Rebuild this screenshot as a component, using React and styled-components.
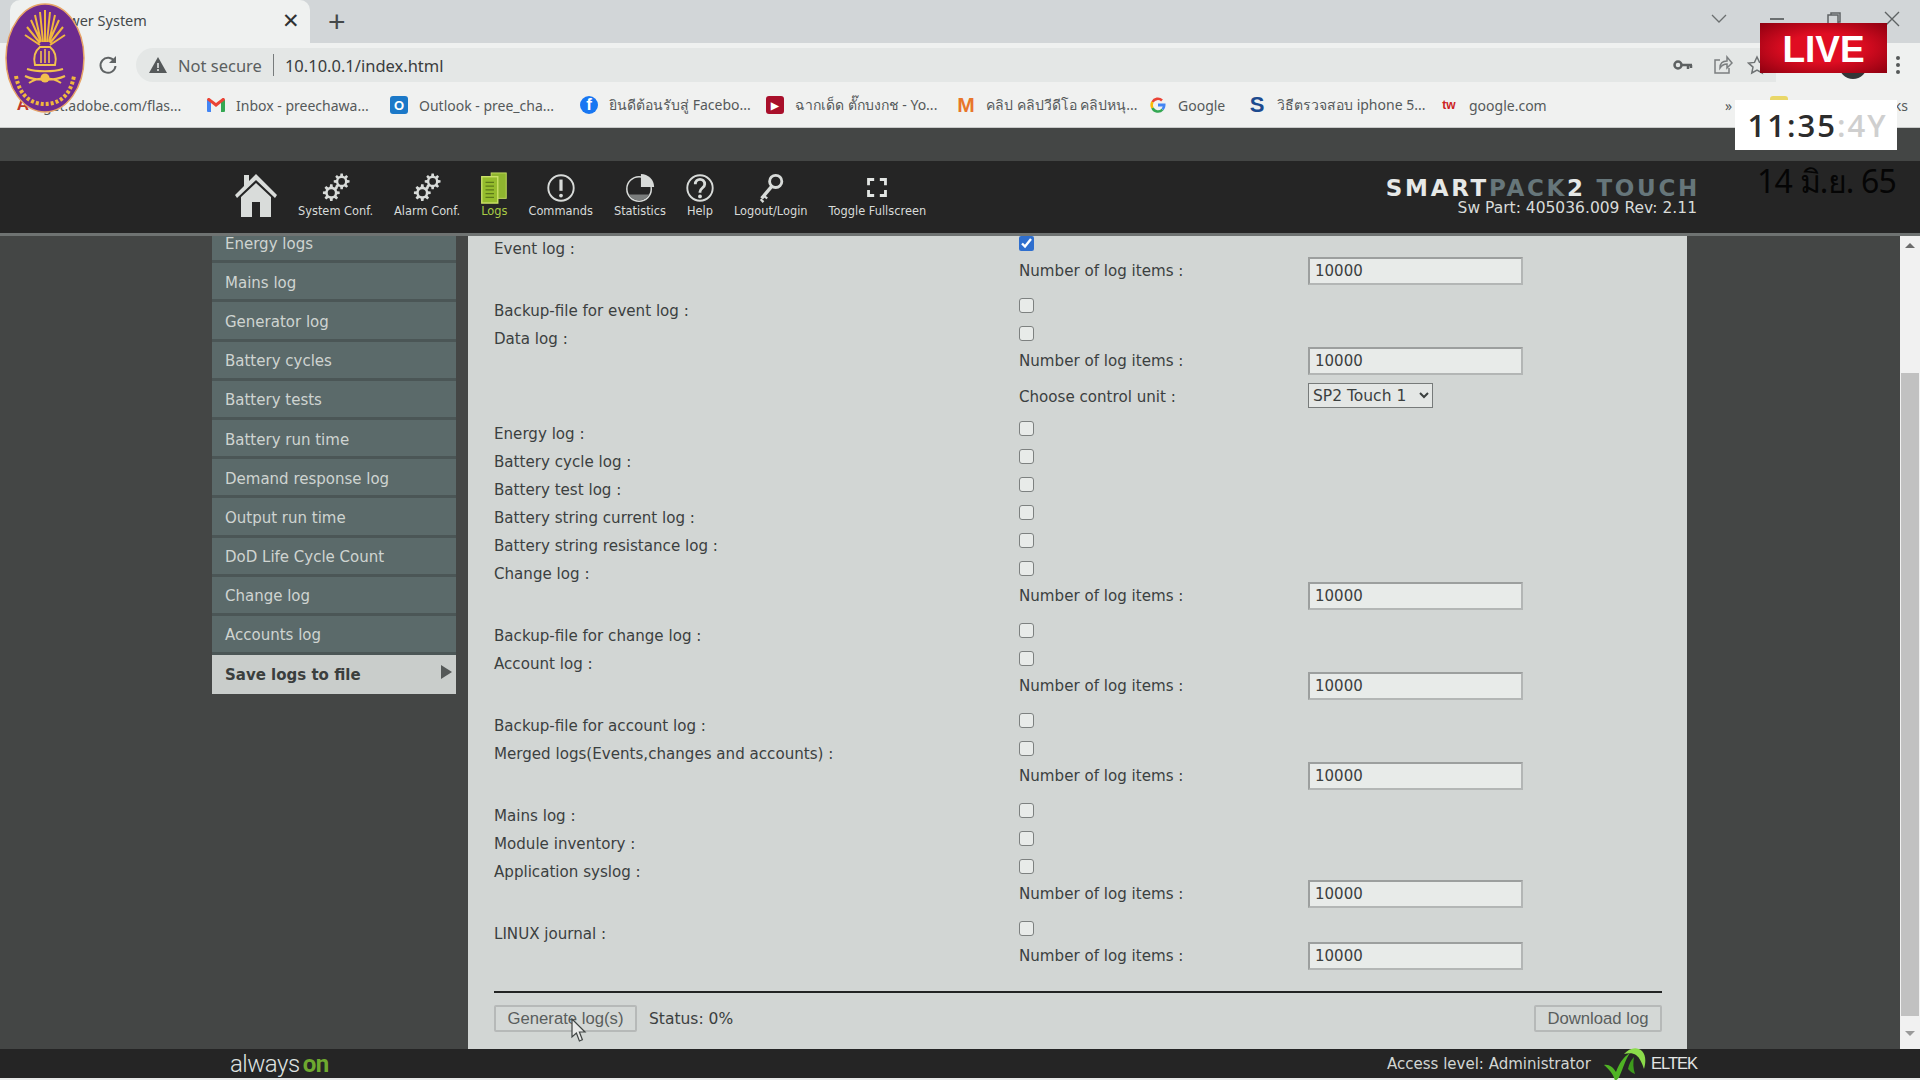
import React from "react";
import styled, { createGlobalStyle } from "styled-components";

const GlobalStyle = createGlobalStyle`
  html, body {
    margin: 0;
    padding: 0;
    width: 1920px;
    height: 1080px;
    overflow: hidden;
    background: #e9ebea;
  }
  * { box-sizing: border-box; }
`;

const gearPath = (cx, cy, r, teeth = 8) => {
  const pts = [];
  const step = (Math.PI * 2) / teeth;
  for (let i = 0; i < teeth; i++) {
    const a = i * step;
    [[-0.3, 0.72], [-0.17, 1], [0.17, 1], [0.3, 0.72]].forEach(([o, k]) => {
      const t = a + o * step * 1.1;
      pts.push(`${(cx + Math.cos(t) * r * k).toFixed(2)} ${(cy + Math.sin(t) * r * k).toFixed(2)}`);
    });
  }
  const h = r * 0.42;
  return `M${pts.join("L")}Z M${cx - h} ${cy}a${h} ${h} 0 1 0 ${h * 2} 0a${h} ${h} 0 1 0 ${-h * 2} 0Z`;
};

const Gears = () => (
  <svg width="30" height="34" viewBox="0 0 30 34">
    <path fill="#d8dbd9" fillRule="evenodd" d={gearPath(21, 10, 8.5)} />
    <path fill="#d8dbd9" fillRule="evenodd" d={gearPath(10, 22, 9)} />
  </svg>
);

const HomeIcon = () => (
  <svg width="42" height="46" viewBox="0 0 42 46">
    <path fill="#d9dcda" d="M9 3h5v6L21 2l21 21-2 3L21 8 2 26l-2-3 9-9z" />
    <path fill="#d9dcda" d="M6 25 21 11l15 14v20H25V30h-8v15H6z" />
  </svg>
);

const LogsIcon = () => (
  <svg width="28" height="34" viewBox="0 0 28 34">
    <rect x="11" y="1" width="16" height="27" fill="#8fb52f" stroke="#c4dc62" />
    <rect x="1" y="5" width="17" height="28" fill="#95bc2d" stroke="#cbe268" strokeWidth="1.5" />
    <path stroke="#5d7a1a" strokeWidth="1.5" d="M5 11h9M5 15h9M5 19h9M5 23h9M5 27h9" />
  </svg>
);

const CommandsIcon = () => (
  <svg width="32" height="34" viewBox="0 0 32 34">
    <circle cx="16" cy="17" r="13.5" fill="none" stroke="#d8dbd9" strokeWidth="2" />
    <path stroke="#d8dbd9" strokeWidth="3.4" d="M16 8v12" />
    <circle cx="16" cy="25" r="2" fill="#d8dbd9" />
  </svg>
);

const StatsIcon = () => (
  <svg width="32" height="34" viewBox="0 0 32 34">
    <circle cx="15" cy="18" r="13" fill="none" stroke="#d8dbd9" strokeWidth="1.6" />
    <path fill="#d8dbd9" d="M17 2a14 14 0 0 1 14 14H17z" />
    <path fill="#7a7d7c" d="M4 24h22a13 13 0 0 1-22 0z" />
  </svg>
);

const HelpIcon = () => (
  <svg width="32" height="34" viewBox="0 0 32 34">
    <circle cx="16" cy="17" r="13.5" fill="none" stroke="#d8dbd9" strokeWidth="2" />
    <path fill="none" stroke="#d8dbd9" strokeWidth="3" d="M11 13c0-7 10-7 10 0 0 4-5 4-5 8v1" />
    <circle cx="16" cy="26" r="2" fill="#d8dbd9" />
  </svg>
);

const KeyIcon = () => (
  <svg width="30" height="34" viewBox="0 0 30 34">
    <circle cx="20" cy="10" r="6.5" fill="none" stroke="#d8dbd9" strokeWidth="3" />
    <path stroke="#d8dbd9" strokeWidth="3.6" d="M16 15 5 28" />
    <path stroke="#d8dbd9" strokeWidth="2.4" d="m7 25 4 3M4 29l3 3" />
  </svg>
);

const FullscreenIcon = () => (
  <svg width="22" height="34" viewBox="0 0 22 34">
    <path fill="none" stroke="#e2e5e3" strokeWidth="3" d="M2 14V8h6M14 8h6v6M20 19v6h-6M8 25H2v-6" />
  </svg>
);

const Emblem = () => (
  <svg width="80" height="110" viewBox="0 0 80 110">
    <ellipse cx="40" cy="55" rx="39" ry="54" fill="#6d2b8e" stroke="#e7a467" strokeWidth="1.5" />
    <g stroke="#f0b73f" strokeWidth="2" fill="none">
      <path d="M40 7v32M35 9l3 30M45 9l-3 30M30 12l6 27M50 12l-6 27M26 17l10 22M54 17 44 39M22 24l13 16M58 24 45 40M20 32l15 10M60 32 45 42" />
    </g>
    <path fill="none" stroke="#f2c04e" strokeWidth="2" d="M30 62c-2-8 0-14 5-18h10c5 4 7 10 5 18z" />
    <path fill="none" stroke="#f2c04e" strokeWidth="1.600" d="M36 48v12M40 46v14M44 48v12" />
    <path fill="none" stroke="#f2c04e" strokeWidth="2" d="M20 73c10 5 30 5 40 0M24 80c8-6 24-6 32 0M22 66c10 3 26 3 36 0" />
    <circle cx="40" cy="75" r="4.500" fill="#f2c04e" />
    <path fill="none" stroke="#f0b73f" strokeWidth="4" strokeDasharray="3 2" d="M11 73c4 22 17 28 29 28s25-6 29-28" />
  </svg>
);

const Mouse = () => (
  <svg width="16" height="25" viewBox="0 0 16 25">
    <path fill="#e8e9e8" stroke="#3f4443" strokeWidth="1.2" d="M1 1v18l4.4-4 3 8 3-1.300-3-7.700H14z" />
  </svg>
);

const EltekMark = () => (
  <svg width="42" height="34" viewBox="0 0 42 34">
    <path fill="#4fb324" d="M0 18c5-1 9 2 12 7 3-8 7-15 14-19-5 7-7 16-10 22-1 3-3 5-5 6C10 28 5 22 0 18z" />
    <path fill="#8bdc4a" d="M20 7c5-6 13-8 18-3 4 4 4 11 2 18-2-6-4-11-8-14-3-2-7-2-12-1z" />
    <path fill="#3d9a1c" d="M24 22c1-5 3-9 6-12-1 6-1 11 1 17-3-1-5-3-7-5z" />
  </svg>
);

const GmailIcon = () => (
  <svg width="18" height="14" viewBox="0 0 18 14">
    <path fill="#4285f4" d="M0 2h4v12H1a1 1 0 0 1-1-1z" />
    <path fill="#34a853" d="M14 2h4v11a1 1 0 0 1-1 1h-3z" />
    <path fill="#ea4335" d="M0 2c0-2 2-2.500 3-1.500L9 5l6-4.500c1-1 3-.5 3 1.500l-4 3-5 4-5-4z" />
  </svg>
);

const GoogleIcon = () => (
  <svg width="16" height="16" viewBox="0 0 16 16">
    <path fill="none" stroke="#ea4335" strokeWidth="2.600" d="M2.500 5A6 6 0 0 1 12 3.500" />
    <path fill="none" stroke="#fbbc05" strokeWidth="2.600" d="M2.500 11a6 6 0 0 1 0-6" />
    <path fill="none" stroke="#34a853" strokeWidth="2.600" d="M12.500 12.500A6 6 0 0 1 2.500 11" />
    <path fill="#4285f4" d="M8 6.500h7.500c.3 2.500-.5 5-2 6.800L11.500 11.500c.6-.5 1-1.200 1.200-2H8z" />
  </svg>
);

const Root = styled.div`
  position: relative;
  width: 1920px;
  height: 1080px;
  overflow: hidden;
  display: flex;
  flex-direction: column;
  font-family: "DejaVu Sans", sans-serif;
`;

/* browser chrome */
const TabStrip = styled.div`
  height: 43px;
  background: #d2d6d8;
  display: flex;
  align-items: stretch;
  padding-left: 10px;
`;

const Tab = styled.div`
  width: 300px;
  background: #eff1f0;
  border-radius: 10px 10px 0 0;
  display: flex;
  align-items: center;
  padding: 0 10px 3px 41px;
  font: 14.5px "Noto Sans", sans-serif;
  color: #45494a;
`;

const TabClose = styled.span`
  margin-left: auto;
  font-size: 21px;
  color: #2f3233;
`;

const NewTab = styled.span`
  margin-left: 18px;
  align-self: center;
  font: 30px "Liberation Sans", sans-serif;
  color: #444849;
`;

const WindowControls = styled.div`
  margin-left: auto;
  display: flex;
  align-items: center;
  gap: 43px;
  padding: 0 20px 6px 0;
  color: #5c6061;
`;

const Toolbar = styled.div`
  height: 39px;
  background: #eff1f0;
  padding: 5px 20px 0 98px;
  display: flex;
  align-items: stretch;
`;

const Reload = styled.div`
  width: 38px;
  display: flex;
  align-items: center;
`;

const AddressBar = styled.div`
  width: 1640px;
  background: #e4e7e6;
  border-radius: 17px 0 0 17px;
  display: flex;
  align-items: center;
  padding-left: 13px;
  font: 16.500px "Noto Sans", sans-serif;
  color: #5b5f60;
`;

const Url = styled.span`
  color: #3a3d3e;
`;

const Divider = styled.span`
  width: 1px;
  height: 22px;
  background: #777b7c;
  margin: 0 11px;
`;

const AddressIcons = styled.div`
  margin-left: auto;
  display: flex;
  align-items: center;
  gap: 20px;
  padding-right: 9px;
  color: #5d6162;
`;

const StarIcon = styled.svg`
  margin-left: -6px;
`;

const WarningIcon = styled.svg`
  margin-right: 11px;
`;

const Avatar = styled.span`
  width: 28px;
  height: 28px;
  margin: 3px 0 0 63px;
  border-radius: 50%;
  background: #333637;
`;

const Kebab = styled.span`
  margin-left: auto;
  align-self: center;
  display: flex;
  flex-direction: column;
  gap: 3px;
`;

const KebabDot = styled.i`
  display: block;
  width: 4px;
  height: 4px;
  border-radius: 50%;
  background: #555959;
`;

const Bookmarks = styled.div`
  height: 46px;
  background: #f0f1f0;
  display: flex;
  align-items: center;
  padding: 1px 12px 0 14px;
  font: 14px "Noto Sans", "Liberation Sans", sans-serif;
  color: #55595a;
  border-bottom: 1px solid #c8cac9;
`;

const Bookmark = styled.div`
  display: flex;
  align-items: center;
  gap: 11px;
  width: ${(p) => p.$w}px;
  flex: none;
  white-space: nowrap;
`;

const Favicon = styled.span`
  width: 18px;
  height: 18px;
  flex: none;
  display: flex;
  align-items: center;
  justify-content: center;
  font: bold ${(p) => p.$size || 17}px "Liberation Sans", sans-serif;
  color: ${(p) => p.$color || "#333"};
  background: ${(p) => p.$bg || "transparent"};
  border-radius: ${(p) => p.$round || 3}px;
`;

const Folder = styled(Favicon)`
  margin-left: 38px;
`;

const Overflow = styled.span`
  margin-left: auto;
`;

/* device page */
const Stripe = styled.div`
  height: 33px;
  background: #444645;
`;

const Header = styled.header`
  height: 75px;
  background: #252525;
  border-bottom: 3px solid #6f7372;
  display: flex;
  align-items: flex-start;
  padding: 9px 223px 0 235px;
  color: #d8dbd9;
`;

const Nav = styled.nav`
  display: flex;
  align-items: flex-start;
  gap: 21px;
`;

const NavItem = styled.div`
  display: flex;
  flex-direction: column;
  align-items: center;
  margin-top: 2px;
  font: 11.400px "DejaVu Sans", sans-serif;
  white-space: nowrap;
  height: 46px;
  color: ${(p) => (p.$active ? "#a9cc45" : "#d8dbd9")};

  /* the label sets the width of an item, the icon may be wider */
  svg {
    margin: 0 -8px;
  }
`;

const HomeItem = styled.div`
  height: 50px;
  padding-top: 2px;
`;

const Brand = styled.div`
  margin-left: auto;
  display: flex;
  flex-direction: column;
  align-items: flex-end;
  padding-top: 7px;
`;

const BrandName = styled.div`
  font: bold 23px "DejaVu Sans", sans-serif;
  letter-spacing: 2.700px;
  margin-right: -3px;
  line-height: 22px;
  white-space: nowrap;
`;

const BrandPart = styled.span`
  color: ${(p) => p.$color};
`;

const BrandSub = styled.div`
  font-size: 15.500px;
  line-height: 20px;
  margin-top: -1px;
`;

const Main = styled.div`
  height: 813px;
  background: #444645;
  display: flex;
  align-items: flex-start;
  padding-left: 212px;
  overflow: hidden;
`;

const Sidebar = styled.ul`
  width: 244px;
  flex: none;
  list-style: none;
  margin: -12px 12px 0 0;
  padding: 0;
`;

const MenuItem = styled.li`
  position: relative;
  height: 39.200px;
  display: flex;
  align-items: center;
  padding: 3px 0 0 13px;
  font-size: 15px;
  font-weight: ${(p) => (p.$active ? "bold" : "normal")};
  color: ${(p) => (p.$active ? "#3a3e3d" : "#cfd4d1")};
  background: ${(p) => (p.$active ? "#c9cdcb" : "#5b6a6a")};
  border-bottom: 3px solid ${(p) => (p.$active ? "#c9cdcb" : "#4b5656")};
`;

const MenuArrow = styled.span`
  position: absolute;
  right: 4px;
  top: 10px;
  border-left: 11px solid #555958;
  border-top: 7px solid transparent;
  border-bottom: 7px solid transparent;
`;

const Panel = styled.section`
  width: 1219px;
  height: 813px;
  flex: none;
  background: #d2d6d4;
  padding: 0 25px 0 26px;
  overflow: hidden;
  color: #3b403f;
  font-size: 15.100px;
`;

const Form = styled.div`
  margin-top: -8px;
`;

const Row = styled.div`
  display: grid;
  grid-template-columns: 525px 289px 215px;
  height: ${(p) => p.$h}px;
  align-items: ${(p) => (p.$top ? "start" : "center")};
`;

const Label = styled.label`
  padding-top: 12px;
  white-space: nowrap;
`;

const FieldLabel = styled.label`
  grid-column: 2;
  padding-top: ${(p) => p.$pad || 6}px;
  white-space: nowrap;
`;

const Check = styled.input.attrs({ type: "checkbox" })`
  grid-column: 2;
  width: 15px;
  height: 15px;
  margin: 0;
  accent-color: #2f6fce;
  appearance: ${(p) => (p.defaultChecked ? "auto" : "none")};
  background: #e8ebe9;
  border: 1.500px solid #7d8180;
  border-radius: 3px;
`;

const NumberInput = styled.input`
  grid-column: 3;
  width: 215px;
  height: 28px;
  margin-top: 1px;
  background: #e8ebe9;
  border: 2px solid #9c9f9e;
  border-right-color: #b3b6b5;
  border-bottom-color: #b3b6b5;
  padding: 0 5px;
  font: 15px "DejaVu Sans", sans-serif;
  color: #3b403f;
`;

const Select = styled.select`
  grid-column: 3;
  width: 125px;
  height: 25px;
  margin-top: 3px;
  background: #e4e7e5;
  border: 1.500px solid #777b7a;
  font: 15.500px "DejaVu Sans", sans-serif;
  color: #3b403f;
`;

const Rule = styled.hr`
  margin: 16px 0 12px;
  border: 0;
  height: 2px;
  background: #222423;
`;

const Actions = styled.div`
  display: flex;
  align-items: center;
`;

const Button = styled.button`
  height: 27px;
  width: ${(p) => p.$w}px;
  background: #d4d8d6;
  border: 2px solid #b6b9b8;
  border-radius: 2px;
  padding: 0;
  font: 16.700px "Liberation Sans", sans-serif;
  color: #5a5e5d;
`;

const Status = styled.span`
  margin-left: 12px;
  font-size: 15.500px;
`;

const Spring = styled.div`
  flex: 1;
`;

const Scrollbar = styled.div`
  width: 20px;
  height: 813px;
  margin-left: auto;
  background: #f1f1f1;
  display: flex;
  flex-direction: column;
  align-items: center;
  color: #7c7c7c;
`;

const ScrollArrow = styled.span`
  width: 0;
  height: 0;
  margin: ${(p) => (p.$down ? "15px 0 0" : "7px 0 0")};
  border-left: 5px solid transparent;
  border-right: 5px solid transparent;
  ${(p) => (p.$down ? "border-top: 5px solid #9a9a9a;" : "border-bottom: 5px solid #6c6c6c;")}
`;

const ScrollThumb = styled.div`
  width: 18px;
  height: 643px;
  margin-top: 125px;
  background: #c1c1c1;
`;

const Footer = styled.footer`
  height: 29px;
  background: #252525;
  display: flex;
  align-items: center;
  padding: 0 223px 0 230px;
  color: #d2d6d3;
`;

const AlwaysOn = styled.div`
  font: 300 24px "Roboto", sans-serif;
  letter-spacing: -0.500px;
  color: #dfe2e0;
`;

const On = styled.b`
  font-weight: 700;
  color: #6ea92f;
  margin-left: 3px;
`;

const Access = styled.div`
  margin-left: auto;
  font-size: 15px;
`;

const EltekName = styled.div`
  font: 16.500px "Liberation Sans", sans-serif;
  letter-spacing: -1px;
  color: #e4e6e5;
  margin-left: 5px;
`;

const LogoSlot = styled.div`
  margin-left: 13px;
  display: flex;
  height: 29px;
  align-items: center;
`;

/* stream overlays */
const EmblemBox = styled.div`
  position: absolute;
  left: 5px;
  top: 3px;
`;

const LiveBadge = styled.div`
  position: absolute;
  left: 1760px;
  top: 23px;
  width: 127px;
  height: 50px;
  padding-top: 3px;
  display: flex;
  align-items: center;
  justify-content: center;
  background: radial-gradient(ellipse at center, #e00d22 40%, #8d0010 100%);
  color: #fff;
  font: bold 37px "Liberation Sans", sans-serif;
`;

const ClockBox = styled.div`
  position: absolute;
  left: 1735px;
  top: 100px;
  width: 162px;
  height: 50px;
  padding-left: 3px;
  background: #fff;
  display: flex;
  align-items: center;
  justify-content: center;
  font: 600 31px "Open Sans", sans-serif;
  letter-spacing: 2px;
  color: #2c2c2c;
`;

const ClockSeconds = styled.span`
  color: #cfcfcf;
`;

const DateText = styled.div`
  position: absolute;
  left: 1757px;
  top: 156px;
  font: 32px "Noto Sans", sans-serif;
  letter-spacing: -0.800px;
  color: #050505;
  white-space: nowrap;
`;

const Pointer = styled.div`
  position: absolute;
  left: 571px;
  top: 1018px;
`;

const NAV = [
  { label: "System Conf.", icon: <Gears /> },
  { label: "Alarm Conf.", icon: <Gears /> },
  { label: "Logs", icon: <LogsIcon />, active: true },
  { label: "Commands", icon: <CommandsIcon /> },
  { label: "Statistics", icon: <StatsIcon /> },
  { label: "Help", icon: <HelpIcon /> },
  { label: "Logout/Login", icon: <KeyIcon /> },
  { label: "Toggle Fullscreen", icon: <FullscreenIcon /> },
];

const MENU = [
  "Energy logs",
  "Mains log",
  "Generator log",
  "Battery cycles",
  "Battery tests",
  "Battery run time",
  "Demand response log",
  "Output run time",
  "DoD Life Cycle Count",
  "Change log",
  "Accounts log",
];

const BOOKMARKS = [
  { w: 193, text: "get.adobe.com/flas...", fav: <Favicon $color="#c0392b">A</Favicon> },
  { w: 183, text: "Inbox - preechawa...", fav: <Favicon><GmailIcon /></Favicon> },
  { w: 190, text: "Outlook - pree_cha...", fav: <Favicon $bg="#1b78c8" $color="#fff" $size={13}>O</Favicon> },
  { w: 186, text: "ยินดีต้อนรับสู่ Facebo...", fav: <Favicon $bg="#1877f2" $color="#fff" $round={9}>f</Favicon> },
  { w: 191, text: "ฉากเด็ด ตั๊กบงกช - Yo...", fav: <Favicon $bg="#a80f2a" $color="#fff" $size={10}>▶</Favicon> },
  { w: 192, text: "คลิป คลิปวีดีโอ คลิปหนุ...", fav: <Favicon $color="#e8762a" $size={21}>M</Favicon> },
  { w: 99, text: "Google", fav: <Favicon><GoogleIcon /></Favicon> },
  { w: 192, text: "วิธีตรวจสอบ iphone 5...", fav: <Favicon $color="#1d4b8f" $size={22}>S</Favicon> },
  { w: 285, text: "google.com", fav: <Favicon $color="#c22" $size={12}>tw</Favicon> },
];

// rows of the form, top to bottom, as they sit in the scrolled page
const FORM = [
  { check: "Event log :", on: true, items: true },
  { check: "Backup-file for event log :" },
  { check: "Data log :", items: true },
  { control: true },
  { check: "Energy log :" },
  { check: "Battery cycle log :" },
  { check: "Battery test log :" },
  { check: "Battery string current log :" },
  { check: "Battery string resistance log :" },
  { check: "Change log :", items: true },
  { check: "Backup-file for change log :" },
  { check: "Account log :", items: true },
  { check: "Backup-file for account log :" },
  { check: "Merged logs(Events,changes and accounts) :", items: true },
  { check: "Mains log :" },
  { check: "Module inventory :" },
  { check: "Application syslog :", items: true },
  { check: "LINUX journal :", items: true },
];

const FormRows = ({ row }) => {
  if (row.control) {
    return (
      <Row $h={33} $top>
        <FieldLabel $pad={8}>Choose control unit :</FieldLabel>
        <Select defaultValue="SP2 Touch 1">
          <option>SP2 Touch 1</option>
        </Select>
      </Row>
    );
  }
  return (
    <>
      <Row $h={28}>
        <Label>{row.check}</Label>
        <Check defaultChecked={row.on} />
      </Row>
      {row.items && (
        <Row $h={34} $top>
          <FieldLabel>Number of log items :</FieldLabel>
          <NumberInput defaultValue="10000" />
        </Row>
      )}
    </>
  );
};

export default function App() {
  return (
    <Root>
      <GlobalStyle />
      <TabStrip>
        <Tab>
          Power System
          <TabClose>✕</TabClose>
        </Tab>
        <NewTab>+</NewTab>
        <WindowControls>
          <svg width="16" height="10" viewBox="0 0 16 10">
            <path fill="none" stroke="#6b6f70" strokeWidth="1.300" d="m1 1 7 7 7-7" />
          </svg>
          <svg width="14" height="2" viewBox="0 0 14 2">
            <path stroke="#6b6f70" strokeWidth="2" d="M0 1h14" />
          </svg>
          <svg width="14" height="14" viewBox="0 0 14 14">
            <path fill="none" stroke="#5f6364" strokeWidth="1.500" d="M1 3h10v10H1zM4 3V1h9v9h-2" />
          </svg>
          <svg width="16" height="16" viewBox="0 0 16 16">
            <path stroke="#5f6364" strokeWidth="1.400" d="m1 1 14 14M15 1 1 15" />
          </svg>
        </WindowControls>
      </TabStrip>
      <Toolbar>
        <Reload>
          <svg width="20" height="20" viewBox="0 0 20 20">
            <path fill="none" stroke="#5f6364" strokeWidth="2" d="M16.500 6.500A7.500 7.500 0 1 0 17.500 11" />
            <path fill="#5f6364" d="M18 1v7h-7z" />
          </svg>
        </Reload>
        <AddressBar>
          <WarningIcon width="18" height="16" viewBox="0 0 18 16">
            <path fill="#55595a" d="M9 0l9 16H0z" />
            <path stroke="#e4e7e6" strokeWidth="1.600" d="M9 6v5M9 12v2" />
          </WarningIcon>
          Not secure
          <Divider />
          <Url>10.10.0.1/index.html</Url>
          <AddressIcons>
            <svg width="20" height="12" viewBox="0 0 20 12">
              <circle cx="5" cy="6" r="3.500" fill="none" stroke="#5d6162" strokeWidth="2.500" />
              <path stroke="#5d6162" strokeWidth="2.500" d="M9 6h10M15 6v4M18 6v3" />
            </svg>
            <svg width="20" height="20" viewBox="0 0 20 20">
              <path fill="none" stroke="#7b7f80" strokeWidth="1.500" d="M7 5H2v13h14v-5M7 13c0-5 3-7 7-7V2l5 6-5 5V9c-3 0-5 1-7 4z" />
            </svg>
            <StarIcon width="20" height="20" viewBox="0 0 20 20">
              <path fill="none" stroke="#6f7374" strokeWidth="1.500" d="m10 2 2.500 5.400 5.900.7-4.400 4 1.200 5.900-5.200-3-5.200 3L6 12.100l-4.400-4 5.900-.7z" />
            </StarIcon>
          </AddressIcons>
        </AddressBar>
        <Avatar />
        <Kebab>
          <KebabDot />
          <KebabDot />
          <KebabDot />
        </Kebab>
      </Toolbar>
      <Bookmarks>
        {BOOKMARKS.map((b) => (
          <Bookmark key={b.text} $w={b.w}>
            {b.fav}
            {b.text}
          </Bookmark>
        ))}
        »
        <Folder $bg="#e9d768" />
        <Overflow>ks</Overflow>
      </Bookmarks>

      <Stripe />
      <Header>
        <Nav>
          <HomeItem>
            <HomeIcon />
          </HomeItem>
          {NAV.map((n) => (
            <NavItem key={n.label} $active={n.active}>
              {n.icon}
              {n.label}
            </NavItem>
          ))}
        </Nav>
        <Brand>
          <BrandName>
            <BrandPart $color="#e6e8e7">SMART</BrandPart>
            <BrandPart $color="#66767a">PACK</BrandPart>
            <BrandPart $color="#e6e8e7">2 </BrandPart>
            <BrandPart $color="#66767a">TOUCH</BrandPart>
          </BrandName>
          <BrandSub>Sw Part: 405036.009 Rev: 2.11</BrandSub>
        </Brand>
      </Header>
      <Main>
        <Sidebar>
          {MENU.map((m) => (
            <MenuItem key={m}>{m}</MenuItem>
          ))}
          <MenuItem $active>
            Save logs to file
            <MenuArrow />
          </MenuItem>
        </Sidebar>
        <Panel>
          <Form>
            {FORM.map((row, i) => (
              <FormRows key={i} row={row} />
            ))}
          </Form>
          <Rule />
          <Actions>
            <Button $w={143}>Generate log(s)</Button>
            <Status>Status: 0%</Status>
            <Spring />
            <Button $w={128}>Download log</Button>
          </Actions>
        </Panel>
        <Scrollbar>
          <ScrollArrow />
          <ScrollThumb />
          <ScrollArrow $down />
        </Scrollbar>
      </Main>
      <Footer>
        <AlwaysOn>
          always<On>on</On>
        </AlwaysOn>
        <Access>Access level: Administrator</Access>
        <LogoSlot>
          <EltekMark />
        </LogoSlot>
        <EltekName>ELTEK</EltekName>
      </Footer>

      <EmblemBox>
        <Emblem />
      </EmblemBox>
      <LiveBadge>LIVE</LiveBadge>
      <ClockBox>
        11:35<ClockSeconds>:4Y</ClockSeconds>
      </ClockBox>
      <DateText>14 มิ.ย. 65</DateText>
      <Pointer>
        <Mouse />
      </Pointer>
    </Root>
  );
}
